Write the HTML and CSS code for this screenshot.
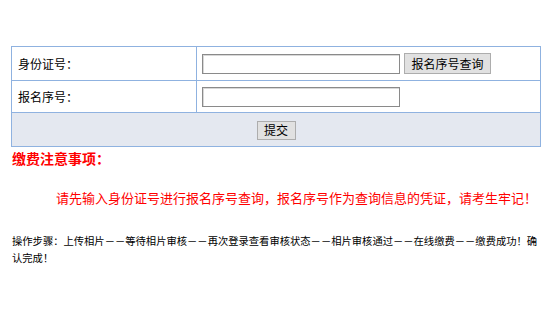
FILE: index.html
```html
<!DOCTYPE html>
<html lang="zh-CN">
<head>
<meta charset="utf-8">
<title>报名序号查询</title>
<link rel="stylesheet" href="styles.css">
</head>
<body>
<div class="page">
  <table class="form">
    <tr class="r1">
      <td class="label">身份证号：</td>
      <td class="field"><input class="txt" type="text"><button class="btn btn-query" type="button">报名序号查询</button></td>
    </tr>
    <tr class="r2">
      <td class="label">报名序号：</td>
      <td class="field"><input class="txt" type="text"></td>
    </tr>
    <tr class="r3">
      <td class="submit-cell" colspan="2"><button class="btn btn-submit" type="button">提交</button></td>
    </tr>
  </table>
  <h3 class="notice-title">缴费注意事项：</h3>
  <p class="notice">请先输入身份证号进行报名序号查询，报名序号作为查询信息的凭证，请考生牢记！</p>
  <p class="steps">操作步骤：上传相片－－等待相片审核－－再次登录查看审核状态－－相片审核通过－－在线缴费－－缴费成功！确认完成！</p>
</div>
</body>
</html>
```
FILE: styles.css
```css
html, body {
  margin: 0;
  padding: 0;
  background: #fff;
}
body {
  font-family: "Noto Sans CJK SC", "Liberation Sans", sans-serif;
  font-size: 12px;
  color: #000;
}
.page {
  padding: 46px 9px 0 11px;
}
.form {
  width: 530px;
  border-collapse: collapse;
  border: 1px solid #8fb2e0;
}
.form td {
  border: 1px solid #8fb2e0;
  padding: 0;
}
.r1 td { height: 33px; }
.r2 td { height: 31px; }
.r3 td { height: 33px; }
.label {
  width: 178px;
  padding-left: 6px !important;
  font-size: 12px;
}
.field {
  padding-left: 5px !important;
}
.txt {
  box-sizing: border-box;
  width: 198px;
  height: 20px;
  margin: 0;
  border: 1px solid #8a8a8a;
  box-shadow: inset 1px 1px 0 #d8d8d8;
  vertical-align: middle;
  padding: 0 2px;
  font-size: 12px;
}
.btn {
  box-sizing: border-box;
  margin: 0;
  padding: 0;
  background: #e1e1e1;
  border: 1px solid #adadad;
  font-family: "Noto Sans CJK SC", sans-serif;
  font-size: 12px;
  color: #000;
  vertical-align: middle;
  line-height: 1;
}
.btn-query {
  width: 87px;
  height: 21px;
  margin-left: 4px;
}
.r3 td {
  background: #e4e8f0;
  text-align: center;
}
.btn-submit {
  width: 39px;
  height: 19px;
}
.notice-title {
  margin: 2px 0 0 1px;
  font-size: 14px;
  font-weight: bold;
  color: #ff0000;
  line-height: 18px;
}
.notice {
  margin: 22px 0 0 45px;
  font-size: 13px;
  color: #ff0000;
  line-height: 18px;
}
.steps {
  margin: 25px 0 0 1px;
  font-size: 10.3px;
  line-height: 17px;
  width: 530px;
}
```
